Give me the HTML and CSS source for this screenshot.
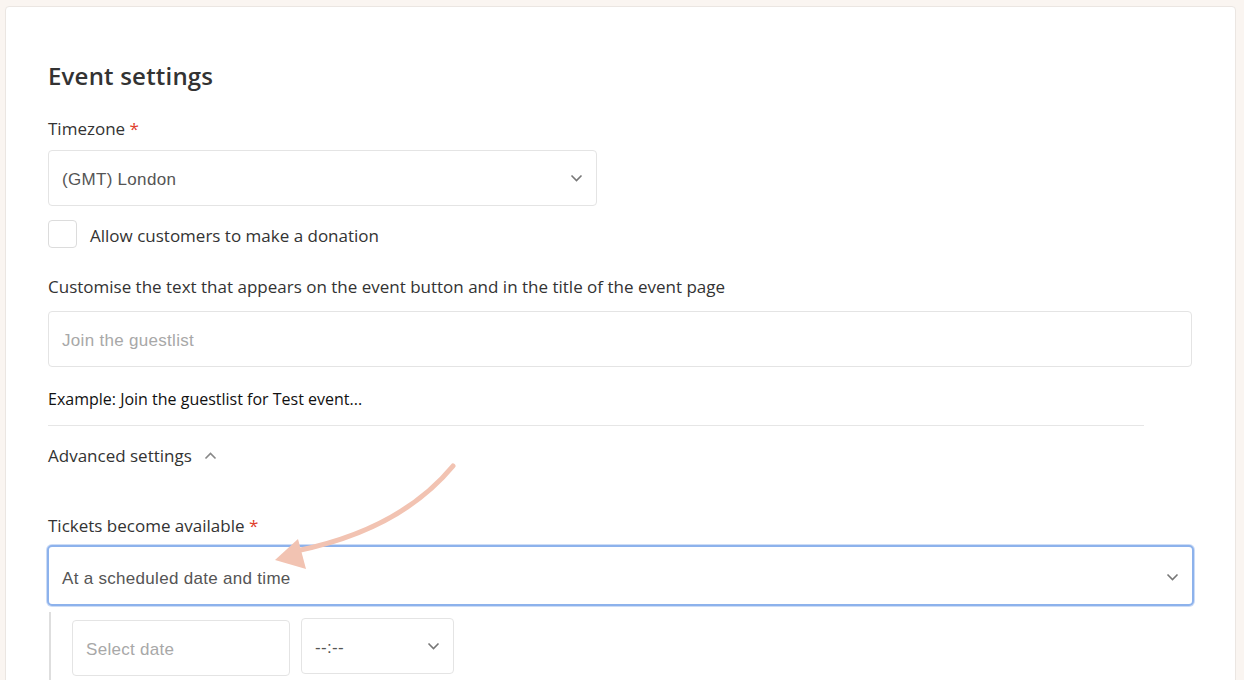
FILE: index.html
```html
<!DOCTYPE html>
<html lang="en">
<head>
    <meta charset="UTF-8">
    <meta name="viewport" content="width=device-width, initial-scale=1.0">
    <title>Event settings</title>
    <link rel="stylesheet" href="styles.css">
</head>
<body>
    <div class="card">
        <h2 class="card-title">Event settings</h2>

        <label class="field-label">Timezone <span class="required">*</span></label>
        <div class="select select-timezone">
            <span>(GMT) London</span>
            <svg class="chevron" viewBox="0 0 12 8"><path d="M1 1.5 L6 6.5 L11 1.5"/></svg>
        </div>

        <label class="checkbox-row">
            <span class="checkbox"></span>
            <span class="checkbox-text">Allow customers to make a donation</span>
        </label>

        <label class="field-label label-custom">Customise the text that appears on the event button and in the title of the event page</label>
        <div class="input">
            <span class="placeholder">Join the guestlist</span>
        </div>

        <p class="hint">Example: Join the guestlist for Test event...</p>

        <hr class="divider">

        <div class="advanced">
            <span>Advanced settings</span>
            <svg class="chevron chevron-up" viewBox="0 0 12 8"><path d="M1 6.5 L6 1.5 L11 6.5"/></svg>
        </div>

        <label class="field-label label-tickets">Tickets become available <span class="required">*</span></label>
        <div class="select select-focus">
            <span>At a scheduled date and time</span>
            <svg class="chevron" viewBox="0 0 12 8"><path d="M1 1.5 L6 6.5 L11 1.5"/></svg>
        </div>

        <div class="schedule">
            <div class="input input-date">
                <span class="placeholder">Select date</span>
            </div>
            <div class="select select-time">
                <span>--:--</span>
                <svg class="chevron" viewBox="0 0 12 8"><path d="M1 1.5 L6 6.5 L11 1.5"/></svg>
            </div>
        </div>
    </div>

    <!-- annotation arrow -->
    <svg class="annotation" width="1244" height="680" viewBox="0 0 1244 680">
        <path d="M453 466 Q 400 530 296 551" fill="none" stroke="#f2c3b2" stroke-width="5" stroke-linecap="round"/>
        <polygon points="275,560 298,539 306,569" fill="#f2c3b2"/>
    </svg>
</body>
</html>
```

FILE: styles.css
```css
* {
    margin: 0;
    padding: 0;
    box-sizing: border-box;
}

body {
    background-color: #faf5f1;
    font-family: "Open Sans", sans-serif;
    color: #333;
    overflow: hidden;
}

.card {
    margin: 6px 8px 0 5px;
    height: 700px;
    background-color: #fff;
    border: 1px solid #ebe6e2;
    border-radius: 4px;
    padding: 53px 43px 0 42px;
    display: flex;
    flex-direction: column;
    align-items: flex-start;
}

.card-title {
    font-size: 24px;
    font-weight: 600;
    line-height: 32px;
    letter-spacing: 0.2px;
    color: #333;
}

.field-label {
    display: block;
    font-size: 17px;
    line-height: 24px;
    margin-top: 25px;
    margin-bottom: 9px;
}

.required {
    color: #e0402c;
}

.select,
.input {
    display: flex;
    align-items: center;
    justify-content: space-between;
    height: 56px;
    border: 1px solid #e4e4e4;
    border-radius: 4px;
    padding: 3px 13px 0;
    font-family: "Liberation Sans", Arial, sans-serif;
    font-size: 17px;
    letter-spacing: 0.3px;
    color: #555;
    background-color: #fff;
}

.select-timezone {
    width: 549px;
}

.chevron {
    width: 13px;
    height: 8px;
    fill: none;
    stroke: #777;
    stroke-width: 1.6;
}

.select .chevron {
    margin-top: -3px;
}

.checkbox-row {
    display: flex;
    align-items: flex-end;
    margin-top: 14px;
}

.checkbox {
    width: 29px;
    height: 28px;
    border: 1px solid #dcdcdc;
    border-radius: 4px;
}

.checkbox-text {
    font-size: 17px;
    line-height: 24px;
    margin-left: 13px;
}

.label-custom {
    margin-top: 27px;
    margin-bottom: 12px;
}

.input {
    width: 100%;
}

.placeholder {
    color: #a8a8a8;
}

.hint {
    font-size: 16px;
    line-height: 20px;
    color: #111;
    margin-top: 22px;
}

.divider {
    width: 1096px;
    border: none;
    border-top: 1px solid #e6e6e6;
    margin-top: 16px;
}

.advanced {
    display: flex;
    align-items: center;
    font-size: 17px;
    line-height: 24px;
    margin-top: 18px;
}

.chevron-up {
    margin-left: 12px;
    stroke: #888;
}

.label-tickets {
    margin-top: 46px;
    margin-bottom: 7px;
}

.select-focus {
    width: calc(100% + 3px);
    margin-left: -1px;
    height: 61px;
    border: 2px solid #8db2ec;
    box-shadow: 0 0 0 1px rgba(141, 178, 236, 0.45);
    border-radius: 5px;
    padding: 6px 13px 0 13px;
}

.schedule {
    display: flex;
    gap: 11px;
    margin-top: 6px;
    margin-left: 1px;
    padding: 8px 0 10px 21px;
    border-left: 2px solid #dedede;
}

.input-date {
    width: 218px;
}

.select-time {
    width: 153px;
    margin-top: -2px;
}

.annotation {
    position: absolute;
    top: 0;
    left: 0;
    pointer-events: none;
}
```
